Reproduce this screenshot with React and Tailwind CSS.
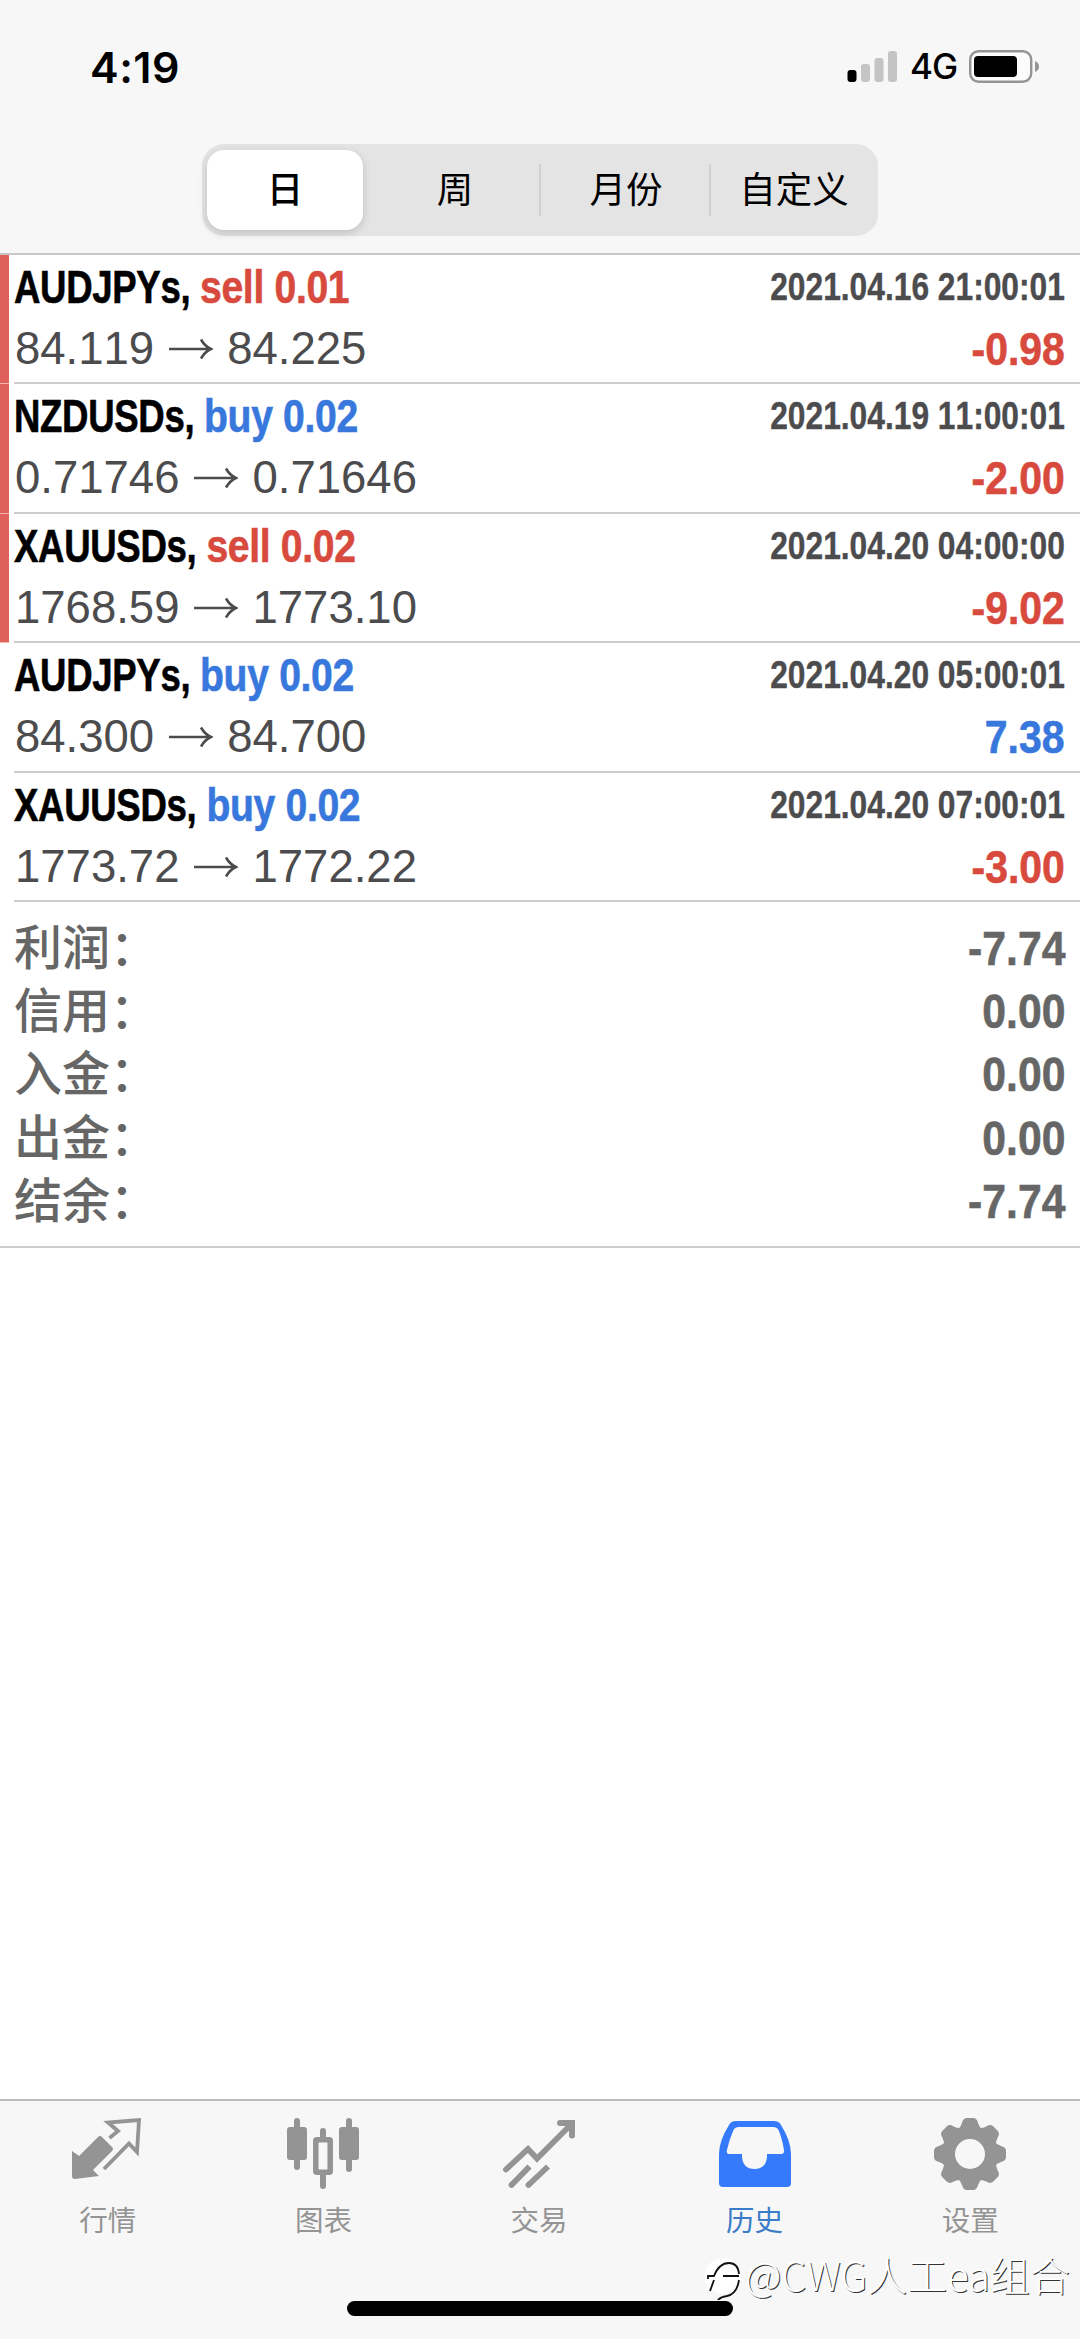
const deals = [
  { symbol: 'AUDJPYs', side: 'sell', lots: '0.01', open: '84.119', close: '84.225', time: '2021.04.16 21:00:01', profit: '-0.98', marked: true },
  { symbol: 'NZDUSDs', side: 'buy', lots: '0.02', open: '0.71746', close: '0.71646', time: '2021.04.19 11:00:01', profit: '-2.00', marked: true },
  { symbol: 'XAUUSDs', side: 'sell', lots: '0.02', open: '1768.59', close: '1773.10', time: '2021.04.20 04:00:00', profit: '-9.02', marked: true },
  { symbol: 'AUDJPYs', side: 'buy', lots: '0.02', open: '84.300', close: '84.700', time: '2021.04.20 05:00:01', profit: '7.38', marked: false },
  { symbol: 'XAUUSDs', side: 'buy', lots: '0.02', open: '1773.72', close: '1772.22', time: '2021.04.20 07:00:01', profit: '-3.00', marked: false },
];

const totals = [
  { label: '利润', value: '-7.74' },
  { label: '信用', value: '0.00' },
  { label: '入金', value: '0.00' },
  { label: '出金', value: '0.00' },
  { label: '结余', value: '-7.74' },
];

const StatusBar = () => (
  <div className="flex h-[144px] items-start justify-between pr-[40px] pl-[90px]">
    <span className="mt-[40px] font-['Inter','Liberation_Sans',sans-serif] text-[43px] leading-[54px] font-semibold tracking-[0.5px] text-black">4:19</span>
    <div className="mt-[50px] flex h-[32px] items-center">
      <svg width="50" height="32" viewBox="0 0 50 32">
        <rect x="0.5" y="20" width="9" height="12" rx="3" fill="#000" />
        <rect x="14" y="14" width="9" height="18" rx="3" fill="#c4c4c5" />
        <rect x="27.5" y="8" width="9" height="24" rx="3" fill="#c4c4c5" />
        <rect x="41" y="1" width="9" height="31" rx="3" fill="#c4c4c5" />
      </svg>
      <span className="ml-[13px] w-[46px] font-['Inter','Liberation_Sans',sans-serif] text-[35px] leading-[32px] font-medium tracking-[-1px] text-black">4G</span>
      <svg className="ml-[13px]" width="71" height="33" viewBox="0 0 71 33">
        <rect x="1.2" y="1.2" width="61" height="30.6" rx="8.5" fill="#fcfcfc" stroke="#949494" strokeWidth="2.4" />
        <rect x="5" y="6" width="43" height="21" rx="4" fill="#000" />
        <path d="M66 11 Q70 12.500 70 16.500 Q70 20.500 66 22 Z" fill="#949494" />
      </svg>
    </div>
  </div>
);

const Segments = () => (
  <div className="mx-auto flex h-[92px] w-[676px] items-center rounded-[22px] bg-[#e4e4e5] p-[5px] text-[36.500px] text-black">
    <div className="flex h-[80px] w-[156px] items-center justify-center rounded-[17px] bg-white pt-[3px] font-medium shadow-[0_3px_10px_rgba(0,0,0,0.16)]">日</div>
    <div className="flex flex-1 items-center justify-center pt-[3px] pl-[8px]">周</div>
    <div className="h-[52px] w-[2px] bg-[#d0d0d2]" />
    <div className="flex w-[168px] items-center justify-center pt-[3px] pl-[2px]">月份</div>
    <div className="h-[52px] w-[2px] bg-[#d0d0d2]" />
    <div className="flex w-[162px] items-center justify-center pt-[3px] pl-[4px]">自定义</div>
  </div>
);

const Arrow = () => (
  <svg className="mx-[14px]" width="45" height="22" viewBox="0 0 45 22" fill="none" stroke="#4c4c4e" strokeWidth="2.6">
    <path d="M1 11 H43 M33 1.500 Q37 8.500 43 11 Q37 13.500 33 20.500" />
  </svg>
);

const Deal = ({ deal }) => (
  <div className="flex h-[129.500px]">
    <div className={`w-[9px] border-b ${deal.marked ? 'border-[#f0b5ae] bg-[#e0605a]' : 'border-white'}`} />
    <div className="ml-[5px] flex flex-1 flex-col border-b-2 border-[#cdcdcf] pr-[15px]">
      <div className="flex h-[64px] items-center justify-between font-bold">
        <div className="origin-left scale-x-[0.795] text-[46px] leading-[54px] tracking-[-0.4px] whitespace-pre text-black [-webkit-text-stroke:0.6px]">
          {deal.symbol}, <span className={`inline-block origin-left scale-x-[1.07] ${deal.side === 'sell' ? 'text-[#d84a3d]' : 'text-[#3878dc]'}`}>{deal.side} {deal.lots}</span>
        </div>
        <div className="origin-right scale-x-[0.835] text-[38px] leading-[54px] whitespace-nowrap text-[#4c4c4e] [font-kerning:none] [-webkit-text-stroke:0.4px]">{deal.time}</div>
      </div>
      <div className="flex h-[60px] items-center justify-between">
        <div className="flex items-center pl-[1px] text-[45.500px] leading-[54px] text-[#4c4c4e] [font-kerning:none]">
          {deal.open}
          <Arrow />
          {deal.close}
        </div>
        <div className={`origin-right scale-x-[0.89] text-[46px] leading-[54px] font-bold [font-kerning:none] [-webkit-text-stroke:0.6px] ${deal.profit.startsWith('-') ? 'text-[#d84a3d]' : 'text-[#3878dc]'}`}>{deal.profit}</div>
      </div>
    </div>
  </div>
);

const Summary = () => (
  <div className="h-[346px] border-b-2 border-[#cdcdcf] pt-[15px] pr-[15px] pl-[14px] text-[#666]">
    {totals.map((row) => (
      <div key={row.label} className="flex h-[63.300px] items-center justify-between">
        <span className="text-[48px] leading-[60px] font-medium">{row.label}：</span>
        <span className="origin-right scale-x-[0.89] text-[48px] leading-[60px] font-bold [font-kerning:none] [-webkit-text-stroke:0.6px]">{row.value}</span>
      </div>
    ))}
  </div>
);

const MarketIcon = () => (
  <svg width="72" height="72" viewBox="0 0 72 72">
    <path d="M0 33 L7 38 L26 19 Q28 17 30 19 L40 29 Q42 31 40 33 L21 52 L27 58 L3 61 Q0 61 0 58 Z" fill="#949494" />
    <path d="M37.500 20 L46 13 L36 4.500 L67 2 L65 34 L57 25.500 L32 51" fill="none" stroke="#949494" strokeWidth="3.800" />
  </svg>
);

const ChartIcon = () => (
  <svg width="72" height="72" viewBox="0 0 72 72" fill="#949494">
    <rect x="7" y="0" width="6" height="52" rx="3" />
    <rect x="0" y="9" width="20" height="33" rx="3" />
    <rect x="59" y="0" width="6" height="54" rx="3" />
    <rect x="52" y="9" width="20" height="33" rx="3" />
    <path d="M33 13 a3 3 0 0 1 6 0 V20 H33 Z M33 56 H39 V68 a3 3 0 0 1 -6 0 Z" />
    <rect x="28.800" y="21.800" width="14.400" height="32.400" rx="1" fill="none" stroke="#949494" strokeWidth="5.500" />
  </svg>
);

const TradeIcon = () => (
  <svg width="72" height="72" viewBox="0 0 72 72" fill="none" stroke="#949494" strokeWidth="5.800">
    <path d="M3 51.500 L25 31 L34 40.500 L67.500 7" strokeLinecap="round" />
    <path d="M57 5 H69 V17.500" strokeWidth="6" strokeLinecap="round" />
    <path d="M8.500 67 L26.500 48.500 M25.500 67 L45 48.500" />
    <path d="M8.500 67 L9 66.500 M25.500 67 L26 66.500" strokeLinecap="round" />
  </svg>
);

const HistoryIcon = () => (
  <svg width="72" height="72" viewBox="0 0 72 72">
    <path d="M17 3 H55 Q60 3 62 7 Q72 23 72 36 V65 Q72 69 68 69 H4 Q0 69 0 65 V36 Q0 23 10 7 Q12 3 17 3 Z" fill="#347afb" />
    <path d="M20 9 H54 Q58 9 59.500 12 Q63 20 65 32 Q65.500 36 62 36 H48 V39 Q47 51 35.500 51 Q24 51 23 39 V36 H10 Q7 36 8 32 Q10 22 14.500 12 Q16 9 20 9 Z" fill="#f7f7f7" />
  </svg>
);

const SettingsIcon = () => (
  <svg width="72" height="72" viewBox="0 0 72 72">
    <g fill="#949494">
      {[0, 45, 90, 135, 180, 225, 270, 315].map((angle) => (
        <path key={angle} d="M23 12 Q27 9 28 5 Q29 0 33 0 H39 Q43 0 44 5 Q45 9 49 12 V20 H23 Z" transform={`rotate(${angle} 36 36)`} />
      ))}
      <circle cx="36" cy="36" r="27" />
    </g>
    <circle cx="36" cy="36" r="15" fill="#f7f7f7" />
  </svg>
);

const tabs = [
  { label: '行情', Icon: MarketIcon },
  { label: '图表', Icon: ChartIcon },
  { label: '交易', Icon: TradeIcon },
  { label: '历史', Icon: HistoryIcon, active: true },
  { label: '设置', Icon: SettingsIcon },
];

const TabBar = () => (
  <div className="relative h-[240px] border-t-2 border-[#bcbcbe] bg-[#f7f7f7]">
    <div className="grid grid-cols-5 pt-[17px] pr-[2px]">
      {tabs.map(({ label, Icon, active }) => (
        <div key={label} className={`flex flex-col items-center ${active ? 'text-[#3a7cc8]' : 'text-[#949494]'}`}>
          <Icon />
          <span className="mt-[11px] text-[28.500px] leading-[40px]">{label}</span>
        </div>
      ))}
    </div>
    <div className="mx-auto mt-[60px] h-[15px] w-[386px] rounded-full bg-black" />
    {/* watermark over the bottom right corner */}
    <div className="absolute top-[147px] right-[10px] flex items-center">
      <svg width="42" height="52" viewBox="0 0 42 52">
        <circle cx="20" cy="28" r="18" fill="#fff" />
        <path d="M7 43 L11 32 M5 31 V28 H11 Q16 15 26 15 Q35 15 36 26 M20 28 H36 M36 32 Q34 46 24 48 Q16 49 14 54" fill="none" stroke="#111" strokeWidth="1.800" />
      </svg>
      <span className="font-['Noto_Sans_CJK_SC',sans-serif] text-[40px] leading-[52px] font-light whitespace-nowrap text-white [text-shadow:1px_1px_0_#333]">@CWG人工ea组合</span>
    </div>
  </div>
);

const App = () => (
  <div className="flex h-[2339px] w-[1080px] flex-col overflow-hidden bg-white font-['Liberation_Sans','Noto_Sans_CJK_SC',sans-serif]">
    <header className="h-[254.500px] border-b-2 border-[#c8c8ca] bg-[#f7f7f7]">
      <StatusBar />
      <Segments />
    </header>
    <main className="flex-1">
      {deals.map((deal) => (
        <Deal key={deal.time} deal={deal} />
      ))}
      <Summary />
    </main>
    <TabBar />
  </div>
);

export default App;
